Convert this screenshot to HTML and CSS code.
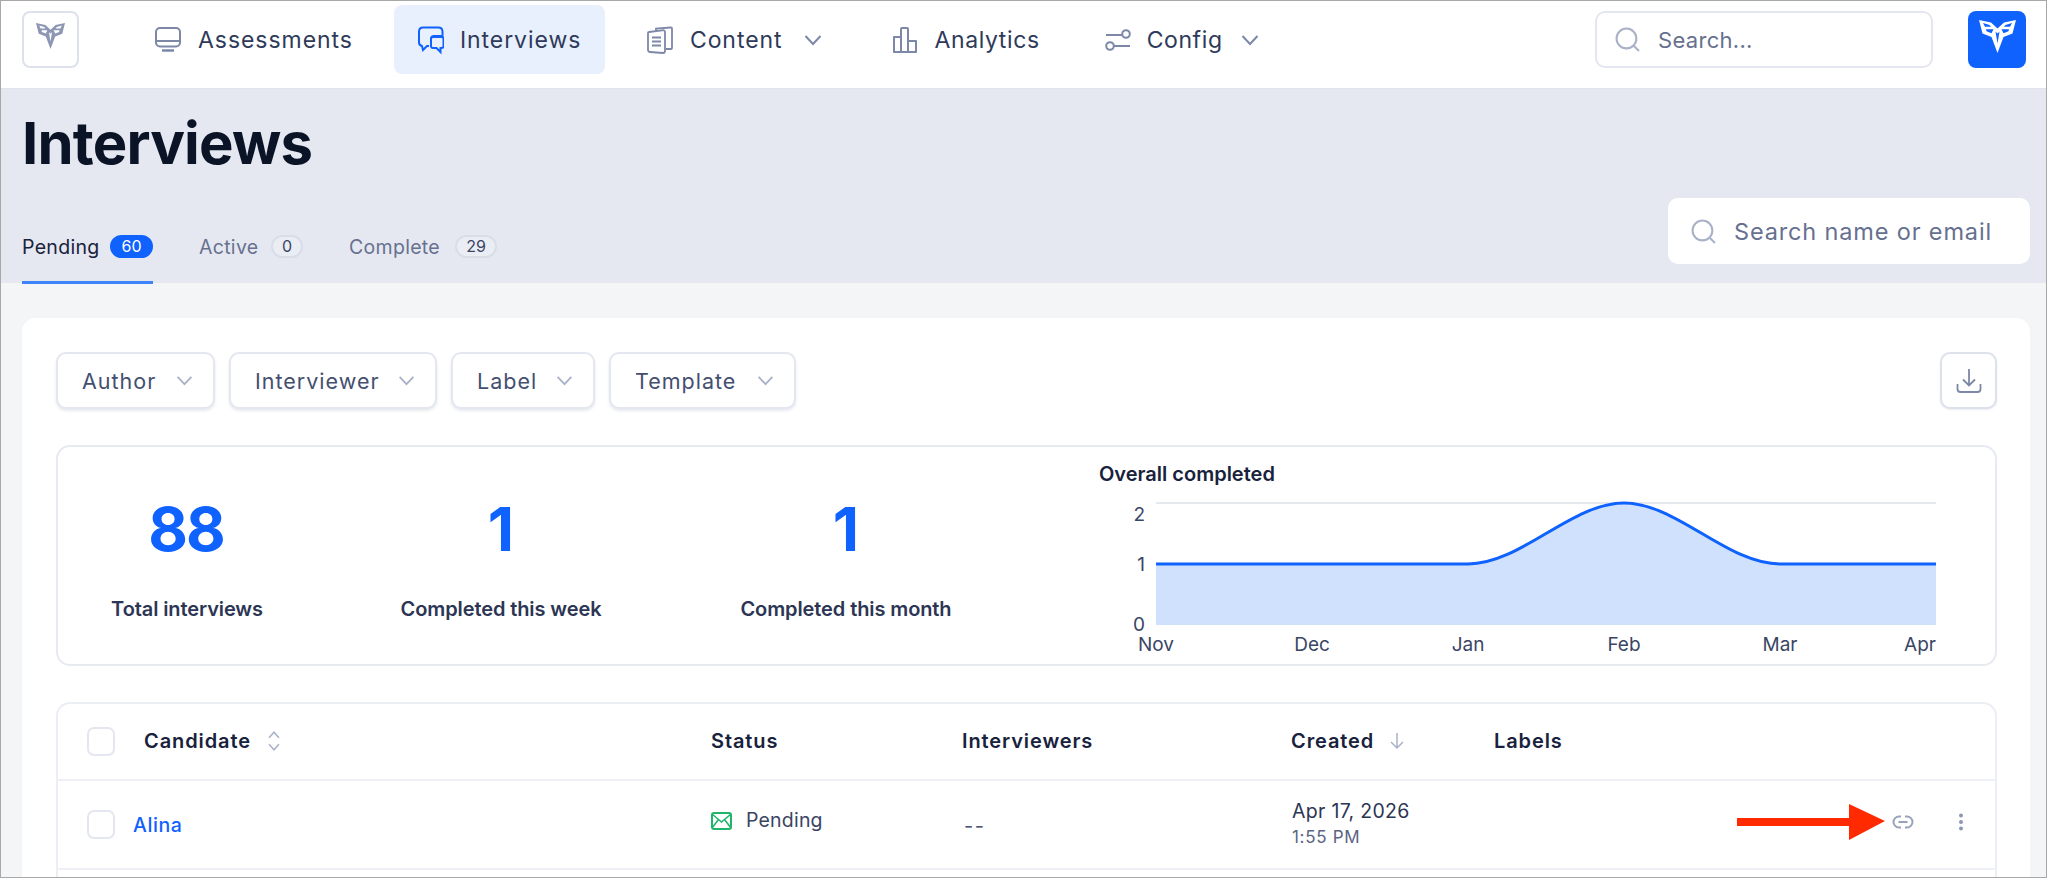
FILE: index.html
```html
<!DOCTYPE html>
<html lang="en">
<head>
<meta charset="utf-8">
<title>Interviews</title>
<link rel="stylesheet" href="styles.css">
</head>
<body>
<svg class="defs" width="0" height="0" aria-hidden="true">
  <defs>
    <symbol id="logo" viewBox="0 0 37 33">
      <path fill-rule="evenodd" d="M0 0 L12 2.500 L18.500 8.500 L25 2.500 L37 0 L33.500 13.500 L24.500 17 L18.500 33 L12.500 17 L3.500 13.500 Z M4 3 L6 6.800 L12 6.800 L10.500 5 Z M7 9.300 L7.500 11.300 L12.500 13.300 L14.500 9.300 Z M16.500 11.500 L18.500 23.500 L20.500 11.500 L18.500 13.500 Z M33 3 L31 6.800 L25 6.800 L26.500 5 Z M30 9.300 L29.500 11.300 L24.500 13.300 L22.500 9.300 Z"/>
    </symbol>
    <symbol id="search" viewBox="0 0 24 24"><circle cx="11" cy="11" r="9.500" fill="none" stroke="currentColor" stroke-width="2"/><path d="M18 18l5 5" fill="none" stroke="currentColor" stroke-width="2"/></symbol>
    <symbol id="chev" viewBox="0 0 18 12"><path d="M1.500 2 9 10l7.500-8" fill="none" stroke="currentColor" stroke-width="2"/></symbol>
  </defs>
</svg>
<div class="frame">
  <nav class="topbar">
    <div class="logo-box"><svg class="logo-mark"><use href="#logo"/></svg></div>
    <ul class="nav">
      <li class="nav-item nav-assess">
        <svg class="nav-icon" viewBox="0 0 26 26"><rect x="1" y="1" width="24" height="18.500" rx="4" fill="none" stroke="currentColor" stroke-width="2"/><path d="M1 14h24" stroke="currentColor" stroke-width="2"/><path d="M7 23.500h12" stroke="currentColor" stroke-width="2.500"/></svg>
        <span>Assessments</span>
      </li>
      <li class="nav-item nav-active">
        <svg class="nav-icon" viewBox="0 0 26 28"><path d="M13 17V12.500a3 3 0 0 1 3-2.500h8.500V5a4 4 0 0 0-4-3.500H5a4 4 0 0 0-4 3.500v11a4 4 0 0 0 3 4l1 4 4-4h2" fill="none" stroke="currentColor" stroke-width="2"/><path d="M13 13a2 2 0 0 1 2-2h8.500a2 2 0 0 1 2 2v7a2 2 0 0 1-2 2h-1v4l-4-4H15a2 2 0 0 1-2-2z" fill="none" stroke="currentColor" stroke-width="2"/></svg>
        <span>Interviews</span>
      </li>
      <li class="nav-item nav-content">
        <svg class="nav-icon" viewBox="0 0 26 28"><path d="M9 5V2.500L24 1.500a1 1 0 0 1 1 1V22a1 1 0 0 1-1 1h-5" fill="none" stroke="currentColor" stroke-width="1.800"/><path d="M1 7a1 1 0 0 1 1-1l13-1.500a2 2 0 0 1 3 2V25a2 2 0 0 1-2 2L3 26a2 2 0 0 1-2-2z" fill="none" stroke="currentColor" stroke-width="1.800"/><path d="M5 11.500h9M5 15.500h9M5 19.500h9" stroke="currentColor" stroke-width="1.800"/></svg>
        <span>Content</span>
        <svg class="nav-chev"><use href="#chev"/></svg>
      </li>
      <li class="nav-item nav-analytics">
        <svg class="nav-icon" viewBox="0 0 26 26"><path d="M2 10h7v15H2zM9 2a1 1 0 0 1 1-1h5a1 1 0 0 1 1 1v23H9zM16 14h8v11h-8z" fill="none" stroke="currentColor" stroke-width="2" stroke-linejoin="round"/></svg>
        <span>Analytics</span>
      </li>
      <li class="nav-item nav-config">
        <svg class="nav-icon" viewBox="0 0 26 22"><path d="M1 6h16M9 17h16" stroke="currentColor" stroke-width="2.200"/><circle cx="21" cy="5" r="3.800" fill="none" stroke="currentColor" stroke-width="2"/><circle cx="5" cy="17" r="3.800" fill="none" stroke="currentColor" stroke-width="2"/></svg>
        <span>Config</span>
        <svg class="nav-chev"><use href="#chev"/></svg>
      </li>
    </ul>
    <div class="top-search">
      <svg class="search-icon"><use href="#search"/></svg>
      <span>Search...</span>
    </div>
    <div class="avatar"><svg class="avatar-mark"><use href="#logo"/></svg></div>
  </nav>

  <header class="band">
    <h1 class="title">Interviews</h1>
    <div class="band-row">
      <div class="tabs">
        <div class="tab tab-active"><span>Pending</span><span class="count count-active">60</span></div>
        <div class="tab tab-second"><span>Active</span><span class="count">0</span></div>
        <div class="tab tab-third"><span>Complete</span><span class="count">29</span></div>
      </div>
      <div class="band-search">
        <svg class="search-icon"><use href="#search"/></svg>
        <span>Search name or email</span>
      </div>
    </div>
  </header>

  <main class="main">
    <section class="card">
      <div class="filters">
        <button class="filter f-author"><span>Author</span><svg class="filter-chev"><use href="#chev"/></svg></button>
        <button class="filter f-interviewer"><span>Interviewer</span><svg class="filter-chev"><use href="#chev"/></svg></button>
        <button class="filter f-label"><span>Label</span><svg class="filter-chev"><use href="#chev"/></svg></button>
        <button class="filter f-template"><span>Template</span><svg class="filter-chev"><use href="#chev"/></svg></button>
        <button class="download">
          <svg viewBox="0 0 26 26" class="download-icon"><path d="M13 1v16M7 11.500l6 6 6-6" fill="none" stroke="currentColor" stroke-width="1.800"/><path d="M1.500 16v5a3 3 0 0 0 3 3h17a3 3 0 0 0 3-3v-5" fill="none" stroke="currentColor" stroke-width="1.800"/></svg>
        </button>
      </div>

      <div class="stats">
        <div class="stat stat-total"><div class="stat-num">88</div><div class="stat-label">Total interviews</div></div>
        <div class="stat stat-week"><div class="stat-num">1</div><div class="stat-label">Completed this week</div></div>
        <div class="stat stat-month"><div class="stat-num">1</div><div class="stat-label">Completed this month</div></div>
        <div class="chart">
          <div class="chart-title">Overall completed</div>
          <svg class="chart-svg" viewBox="0 0 860 184" width="860" height="184">
            <line x1="75" y1="14" x2="855" y2="14" class="grid"/>
            <path class="area" d="M75 75H387C440 75 490 14 543 14S646 75 699 75H855V136H75Z"/>
            <path class="curve" d="M75 75H387C440 75 490 14 543 14S646 75 699 75H855"/>
            <text x="64" y="32" text-anchor="end" class="axis">2</text>
            <text x="64" y="82" text-anchor="end" class="axis">1</text>
            <text x="64" y="142" text-anchor="end" class="axis">0</text>
            <text x="75" y="162" text-anchor="middle" class="axis">Nov</text>
            <text x="231" y="162" text-anchor="middle" class="axis">Dec</text>
            <text x="387" y="162" text-anchor="middle" class="axis">Jan</text>
            <text x="543" y="162" text-anchor="middle" class="axis">Feb</text>
            <text x="699" y="162" text-anchor="middle" class="axis">Mar</text>
            <text x="855" y="162" text-anchor="end" class="axis">Apr</text>
          </svg>
        </div>
      </div>

      <div class="table">
        <div class="row row-head">
          <span class="check"></span>
          <div class="col col-cand head-cand">
            <span>Candidate</span>
            <svg class="sort-icon" viewBox="0 0 12 20"><path d="M1.500 7 6 2l4.500 5M1.500 13 6 18l4.500-5" fill="none" stroke="currentColor" stroke-width="1.400"/></svg>
          </div>
          <div class="col col-status">Status</div>
          <div class="col col-people">Interviewers</div>
          <div class="col col-created">
            <span>Created</span>
            <svg class="down-icon" viewBox="0 0 16 18"><path d="M8 1v15M2 10l6 6 6-6" fill="none" stroke="currentColor" stroke-width="1.500"/></svg>
          </div>
          <div class="col col-labels">Labels</div>
        </div>
        <div class="row row-body">
          <span class="check"></span>
          <a class="col col-cand name">Alina</a>
          <div class="col col-status status">
            <svg class="mail-icon" viewBox="0 0 21 18"><rect x="1" y="1" width="19" height="16" rx="2" fill="none" stroke="currentColor" stroke-width="2"/><path d="M1 2l9.500 8L20 2M1 16l6.500-8.500M20 16l-6.500-8.500" fill="none" stroke="currentColor" stroke-width="1.600"/></svg>
            <span>Pending</span>
          </div>
          <div class="col col-people dashes">--</div>
          <div class="col col-created">
            <div class="date-wrap"><div class="date">Apr 17, 2026</div><div class="time">1:55 PM</div></div>
          </div>
          <div class="actions">
            <svg class="callout" viewBox="0 0 148 36"><path d="M0 14h112V0l36 17-36 19V22H0z"/></svg>
            <svg class="link-icon" viewBox="0 0 22 14"><path d="M9 1.500H7a5.500 5.500 0 0 0 0 11h2M13 1.500h2a5.500 5.500 0 0 1 0 11h-2M6.500 7h9" fill="none" stroke="currentColor" stroke-width="2"/></svg>
            <svg class="more-icon" viewBox="0 0 6 18"><circle cx="3" cy="2.500" r="2"/><circle cx="3" cy="9" r="2"/><circle cx="3" cy="15.500" r="2"/></svg>
          </div>
        </div>
        <div class="row row-next"></div>
      </div>
    </section>
  </main>
</div>
</body>
</html>
```

FILE: styles.css
```css
* { box-sizing: border-box; }
html, body { margin: 0; padding: 0; background: #fff; }
body { font-family: "Inter", "Liberation Sans", sans-serif; color: #2b3655; width: 2048px; height: 880px; overflow: hidden; }
.defs { display: block; height: 0; }
.frame { width: 2047px; height: 878px; border: 1px solid #a8a8a8; overflow: hidden; background: #f4f5f7; }

.topbar { height: 88px; background: #fff; display: flex; align-items: flex-start; padding-left: 21px; border-bottom: 1px solid #e0e3ec; }
.logo-box { width: 57px; height: 57px; margin-top: 10px; border: 2px solid #dde1ec; border-radius: 8px; display: flex; align-items: center; justify-content: center; }
.logo-mark { width: 29px; height: 26px; fill: #8d97b4; margin-bottom: 7px; }
.nav { list-style: none; margin: 4px 0 0 0; padding: 0; display: flex; }
.nav-item { height: 69px; display: flex; align-items: center; font-size: 23px; letter-spacing: 0.95px; color: #2f3a5a; }
.nav-icon { width: 26px; height: 30px; color: #7d88a9; margin-right: 17px; flex: none; }
.nav-assess { margin-left: 76px; }
.nav-active { margin-left: 41px; width: 211px; padding-left: 24px; background: #e9f0fd; border-radius: 8px; color: #2f3a5a; }
.nav-active .nav-icon { color: #0f62fe; margin-right: 16px; }
.nav-content { margin-left: 42px; }
.nav-analytics { margin-left: 70px; letter-spacing: 0.6px; }
.nav-config { margin-left: 65px; letter-spacing: 0.6px; }
.nav-config .nav-icon { margin-right: 16px; }
.nav-chev { width: 18px; height: 12px; color: #7d88a9; margin-left: 21px; }
.nav-config .nav-chev { margin-left: 18px; }
.top-search { margin-left: auto; margin-top: 10px; width: 338px; height: 57px; border: 2px solid #e4e7f0; border-radius: 10px; display: flex; align-items: center; padding-left: 18px; font-size: 22px; color: #66708f; letter-spacing: 0.3px; }
.search-icon { width: 25px; height: 25px; color: #aab2c8; margin-right: 18px; flex: none; }
.avatar { width: 58px; height: 57px; margin: 10px 20px 0 35px; background: #0f62fe; border-radius: 8px; display: flex; align-items: center; justify-content: center; }
.avatar-mark { width: 37px; height: 33px; fill: #fff; margin-bottom: 6px; }

.band { height: 194px; background: #e5e8f1; padding: 0 16px 0 21px; position: relative; }
.title { margin: 0; padding-top: 22px; font-size: 58px; line-height: 64px; font-weight: 700; letter-spacing: -0.8px; color: #0b1427; }
.band-row { display: flex; justify-content: space-between; align-items: flex-end; margin-top: 23px; }
.tabs { display: flex; }
.tab { display: flex; align-items: flex-start; justify-content: space-between; height: 50px; padding-top: 1px; font-size: 19.500px; letter-spacing: 0.3px; color: #67718f; margin-right: 46px; }
.tab span:first-child { line-height: 24px; }
.tab-active { width: 131px; color: #18223c; border-bottom: 3px solid #3d84fb; }
.tab-second { width: 104px; }
.tab-third { width: 148px; margin-right: 0; }
.count { min-width: 31px; height: 23px; padding: 0 9px; border: 2px solid #d9dde8; border-radius: 12px; font-size: 16px; line-height: 19px; text-align: center; letter-spacing: 0; color: #3a4564; background: #eaedf4; }
.count-active { background: #0f62fe; border-color: #0f62fe; color: #fff; min-width: 43px; }
.band-search { width: 362px; height: 66px; background: #fff; border-radius: 10px; display: flex; align-items: center; padding-left: 23px; font-size: 23.500px; letter-spacing: 0.85px; color: #66708f; margin-bottom: 20px; }

.main { padding: 35px 16px 0 21px; }
.card { width: 2008px; height: 700px; background: #fff; border-radius: 14px 14px 0 0; padding: 34px 33px 0 34px; }
.filters { display: flex; height: 57px; gap: 14px; }
.filter { height: 57px; background: #fff; border: 2px solid #e4e7f0; border-radius: 10px; box-shadow: 0 2px 3px rgba(60, 70, 110, .12); display: flex; align-items: center; justify-content: space-between; padding: 0 20px 0 24px; font: inherit; font-size: 21.500px; letter-spacing: 1px; color: #444f70; }
.f-author { width: 159px; }
.f-interviewer { width: 208px; }
.f-label { width: 144px; }
.f-template { width: 187px; }
.filter-chev { width: 17px; height: 11px; color: #aab2c8; flex: none; }
.download { margin-left: auto; width: 57px; height: 57px; background: #fff; border: 2px solid #dde1ec; border-radius: 10px; box-shadow: 0 1px 2px rgba(60, 70, 110, .1); padding: 0; display: flex; align-items: center; justify-content: center; }
.download-icon { width: 26px; height: 26px; color: #7d88a9; }

.stats { margin-top: 36px; height: 221px; border: 2px solid #e8eaf2; border-radius: 14px; display: flex; position: relative; }
.stat { position: absolute; top: 54px; transform: translateX(-50%); text-align: center; white-space: nowrap; }
.stat-total { left: 129px; }
.stat-week { left: 443px; }
.stat-month { left: 788px; }
.stat-num { font-size: 61px; line-height: 56px; font-weight: 700; letter-spacing: -2px; padding-right: 2px; color: #0f62fe; }
.stat-label { margin-top: 39px; font-size: 20px; line-height: 26px; font-weight: 600; letter-spacing: -0.1px; color: #2c3654; }
.chart { position: absolute; left: 1041px; top: 14px; }
.chart-title { font-size: 20px; line-height: 26px; font-weight: 600; color: #18223c; }
.chart-svg { display: block; margin: 2px 0 0 -18px; }
.grid { stroke: #e6e8f0; stroke-width: 2; }
.area { fill: #d0e1fd; }
.curve { fill: none; stroke: #0f62fe; stroke-width: 3; }
.axis { font-family: "Inter", sans-serif; font-size: 19px; fill: #3a4564; }

.table { margin-top: 36px; border: 2px solid #eceef5; border-bottom: 0; border-radius: 14px 14px 0 0; }
.row { display: flex; align-items: center; padding-left: 29px; border-bottom: 2px solid #eff0f7; position: relative; }
.row-head { height: 77px; font-size: 20px; font-weight: 600; color: #18223c; letter-spacing: 0.9px; }
.row-head .col { padding-bottom: 1px; }
.row-body { height: 89px; font-size: 19px; color: #3a4564; }
.row-next { height: 20px; border-bottom: 0; }
.check { width: 28px; height: 29px; border: 2px solid #e4e7f0; border-radius: 7px; flex: none; }
.col { display: flex; align-items: center; }
.col-cand { width: 596px; padding-left: 29px; }
.row-body .col-cand { padding-left: 18px; }
.col-status { width: 251px; }
.col-people { width: 329px; }
.row-body .col-people { width: 330px; }
.col-created { width: 203px; }
.sort-icon { width: 14px; height: 22px; color: #aab2c8; margin-left: 16px; }
.down-icon { width: 16px; height: 18px; color: #aab2c8; margin-left: 15px; }
.name { color: #0f62fe; font-weight: 500; font-size: 19.500px; letter-spacing: 0.6px; }
.status { padding-bottom: 10px; font-size: 19.500px; letter-spacing: 0.2px; }
.mail-icon { width: 21px; height: 18px; color: #21b46b; margin-right: 14px; margin-top: 2px; }
.dashes { font-size: 20px; letter-spacing: 1.500px; padding-left: 2px; color: #4b5574; padding-top: 3px; }
.date-wrap { margin-bottom: 2px; }
.date { font-size: 19.500px; line-height: 26px; letter-spacing: 0.3px; color: #2c3654; }
.time { font-size: 17px; line-height: 26px; letter-spacing: 0.7px; color: #5a6482; }
.actions { position: absolute; top: 0; right: 0; width: 280px; height: 100%; }
.callout { position: absolute; left: 22px; top: 23px; width: 148px; height: 36px; fill: #ff2a00; }
.link-icon { position: absolute; left: 177px; top: 34px; width: 22px; height: 14px; color: #98a2bc; }
.more-icon { position: absolute; left: 243px; top: 32px; width: 6px; height: 18px; fill: #8d97b4; }
```
